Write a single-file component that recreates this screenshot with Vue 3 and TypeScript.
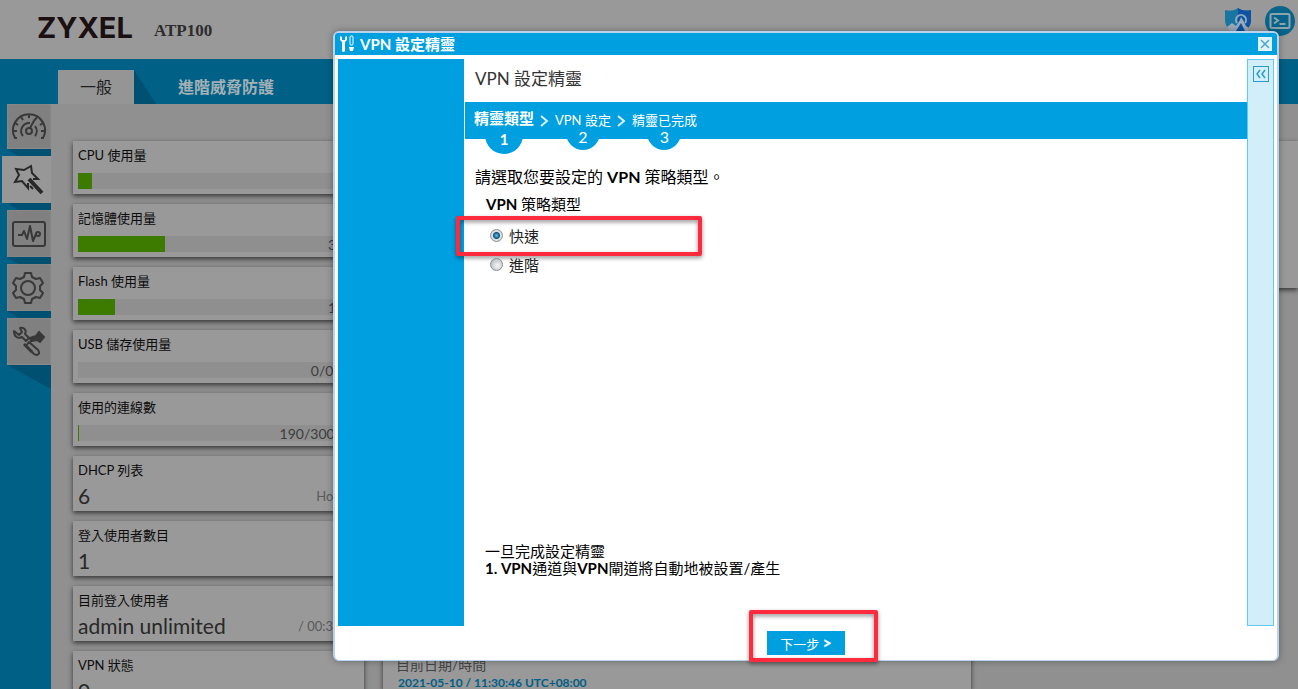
<script setup lang="ts">
import { ref } from 'vue'

interface Usage {
  label: string
  value: string
  percent: number
}
interface Info {
  label: string
  value: string
  extra?: string
}

const usages: Usage[] = [
  { label: 'CPU 使用量', value: '5 %', percent: 5 },
  { label: '記憶體使用量', value: '31 %', percent: 31 },
  { label: 'Flash 使用量', value: '13 %', percent: 13 },
  { label: 'USB 儲存使用量', value: '0/0 MB', percent: 0 },
  { label: '使用的連線數', value: '190/300000', percent: 0.4 },
]
const infos: Info[] = [
  { label: 'DHCP 列表', value: '6', extra: 'Hosts…' },
  { label: '登入使用者數目', value: '1' },
  { label: '目前登入使用者', value: 'admin unlimited', extra: '/ 00:30:00' },
  { label: 'VPN 狀態', value: '0' },
]
const steps = ['精靈類型', 'VPN 設定', '精靈已完成']
const currentStep = ref(0)
const policy = ref('express')
</script>

<template>
  <div class="page">
    <header class="top">
      <span class="logo">ZYXEL</span>
      <span class="model">ATP100</span>
      <div class="tools">
        <button class="tool" aria-label="SecuReporter">
          <svg width="28" height="28" viewBox="0 0 28 28">
            <path d="M14 1C10 4 5 4 1 3v10c0 7 5 11 13 15 8-4 13-8 13-15V3c-4 1-9 1-13-2z" fill="#1976a3" />
            <path d="M14 1c4 3 9 3 13 2v10c0 7-5 11-13 15z" fill="#0e52a0" />
            <path d="M13 16a5 5 0 1 1 8 0" fill="none" stroke="#8fa9c2" stroke-width="2" />
            <path d="M3 20l5-4 4 3 4-6 1-3 2 3 3 6 3 2-3 4-8 3-8-4z" fill="#9aabba" />
            <path d="M12 24l5-8 4 8z" fill="#0e52a0" />
          </svg>
        </button>
        <button class="tool" aria-label="CLI">
          <svg width="30" height="30" viewBox="0 0 30 30">
            <circle cx="15" cy="15" r="15" fill="#0a6489" />
            <rect x="5.500" y="8" width="19" height="14" rx="1.500" fill="none" stroke="#8da3ad" stroke-width="2" />
            <path d="M9 11.500l4 3-4 3M14.500 18h6" fill="none" stroke="#8da3ad" stroke-width="2" />
          </svg>
        </button>
      </div>
    </header>

    <nav class="tabs">
      <button class="tab active">一般</button>
      <button class="tab">進階威脅防護</button>
    </nav>

    <div class="body">
      <nav class="side">
        <button class="side-btn first" aria-label="Dashboard">
          <svg width="36" height="36" viewBox="0 0 36 36" fill="none" stroke="#383838" stroke-width="2">
            <path d="M6 29H4a16 16 0 1 1 28 0H30" />
            <path d="M18 6v3M10 8l2 3M4 14l3 2M2 22h4M32 14l-3 2M34 22h-4M26 8l-2 3" />
            <path d="M12 27a8 8 0 0 1 7-13M24 17a8 8 0 0 1 0 10" />
            <circle cx="18" cy="22" r="3" />
            <path d="M19 19l5-9" />
          </svg>
        </button>
        <i class="fold"></i>
        <button class="side-btn active" aria-label="Wizard">
          <svg width="36" height="36" viewBox="0 0 36 36" fill="none" stroke="#282828" stroke-width="2">
            <path d="M24 17H29L23 11L22 4L15 8L7 7L10 13L6 20L13 19L19 26V21" />
            <path d="M20 17L33 31" stroke-width="4" />
            <path d="M21 24l3 3" />
          </svg>
        </button>
        <i class="fold"></i>
        <button class="side-btn" aria-label="Monitor">
          <svg width="36" height="36" viewBox="0 0 36 36" fill="none" stroke="#383838" stroke-width="2">
            <rect x="2" y="6" width="32" height="24" rx="2" />
            <path d="M7 19h4l2-4 3 8 3-13 3 15 3-7" stroke-linejoin="round" />
            <circle cx="27" cy="18" r="2" />
          </svg>
        </button>
        <i class="fold"></i>
        <button class="side-btn" aria-label="Configuration">
          <svg width="36" height="36" viewBox="0 0 36 36" fill="none" stroke="#383838" stroke-width="2">
            <path d="M14 3h6l1 4 4 2 4-1 3 5-3 3v4l3 3-3 5-4-1-4 2-1 4h-6l-1-4-4-2-4 1-3-5 3-3v-4l-3-3 3-5 4 1 4-2z" stroke-linejoin="round" />
            <circle cx="17" cy="18" r="7" />
          </svg>
        </button>
        <i class="fold"></i>
        <button class="side-btn" aria-label="Maintenance">
          <svg width="36" height="36" viewBox="0 0 36 36" fill="none" stroke="#383838" stroke-width="2">
            <path d="M3 7c0 6 4 8 8 6l4 4 3-3-4-4c2-4-1-7-5-6l2 4-3 3z" stroke-linejoin="round" />
            <path d="M18 18l9 8c3 4-1 6-4 4l-8-8z" stroke-linejoin="round" />
            <path d="M19 14l6-2 3-4 5 5-4 5-3-2-6 1z" fill="#383838" />
            <path d="M13 20l8 8" stroke-width="3" />
          </svg>
        </button>
        <i class="fold last"></i>
      </nav>

      <main class="dash">
        <section class="col">
          <article v-for="u in usages" :key="u.label" class="card">
            <h3>{{ u.label }}</h3>
            <div class="bar">
              <div class="fill" :style="{ width: u.percent + '%' }"></div>
              <span>{{ u.value }}</span>
            </div>
          </article>
          <article v-for="i in infos" :key="i.label" class="card tall">
            <h3>{{ i.label }}</h3>
            <div class="info">
              <strong>{{ i.value }}</strong>
              <span>{{ i.extra }}</span>
            </div>
          </article>
        </section>
        <section class="col mid">
          <article class="card clock">
            <span class="clock-label">目前日期/時間</span>
            <a class="clock-time" href="#">2021-05-10 / 11:30:46 UTC+08:00</a>
          </article>
        </section>
        <section class="col rest"><article class="card blank"></article></section>
      </main>
    </div>

    <div class="overlay">
      <section class="dialog" role="dialog" aria-labelledby="dlg-title">
        <header class="dlg-head">
          <svg width="16" height="18" viewBox="0 0 16 18">
            <path d="M1 1v4l2 2v9q1.500 2 3 0V7l2-2V1L6 2v3H3V2z" fill="#fff" />
            <rect x="11" y="1" width="3" height="9" rx="1" fill="none" stroke="#fff" />
            <path d="M10 12h5l-1 4h-3z" fill="#fff" />
          </svg>
          <h1 id="dlg-title">VPN 設定精靈</h1>
          <button class="close" aria-label="關閉">
            <svg width="14" height="14" viewBox="0 0 14 14">
              <path d="M3 3l8 8M11 3l-8 8" stroke="#4fa3cb" stroke-width="1.500" />
            </svg>
          </button>
        </header>

        <div class="dlg-body">
          <aside class="art"></aside>
          <div class="content">
            <h2>VPN 設定精靈</h2>
            <ol class="steps">
              <li v-for="(s, n) in steps" :key="s" :class="{ current: n === currentStep }">
                <svg v-if="n > 0" class="chev" width="9" height="12" viewBox="0 0 9 12">
                  <path d="M1 1l6 5-6 5" fill="none" stroke="#d9f1fb" stroke-width="2" />
                </svg>
                <span class="step">{{ s }}<span class="num">{{ n + 1 }}</span></span>
              </li>
            </ol>
            <form class="form" @submit.prevent>
              <p class="ask">請選取您要設定的 <b>VPN</b> 策略類型。</p>
              <fieldset>
                <legend><b>VPN</b> 策略類型</legend>
                <div class="option">
                  <input id="p1" v-model="policy" type="radio" name="policy" value="express" />
                  <label for="p1">快速</label>
                  <i class="mark mark-option"></i>
                </div>
                <div class="option">
                  <input id="p2" v-model="policy" type="radio" name="policy" value="advanced" />
                  <label for="p2">進階</label>
                </div>
              </fieldset>
              <p class="note">一旦完成設定精靈<br /><b>1. VPN</b>通道與<b>VPN</b>閘道將自動地被設置/產生</p>
            </form>
          </div>
          <aside class="strip">
            <button aria-label="收合">
              <svg width="14" height="14" viewBox="0 0 14 14">
                <path d="M6 3L3 7l3 4M11 3L8 7l3 4" fill="none" stroke="#2a9cc9" stroke-width="1.500" />
              </svg>
            </button>
          </aside>
        </div>

        <footer class="dlg-foot">
          <div class="next-wrap">
            <button class="next">下一步 <b>&gt;</b></button>
            <i class="mark mark-next"></i>
          </div>
        </footer>
      </section>
    </div>
  </div>
</template>

<style>
html,
body {
  overflow: hidden;
}
</style>

<style scoped>
* {
  box-sizing: border-box;
}
.page {
  position: relative;
  height: 100vh;
  overflow: hidden;
  display: flex;
  flex-direction: column;
  background: #909090;
  font-family: Lato, 'Noto Sans CJK TC', sans-serif;
  color: #000;
}
button {
  border: 0;
  padding: 0;
  background: none;
  font: inherit;
  color: inherit;
}
h1,
h2,
h3,
p,
ol {
  margin: 0;
  padding: 0;
}

.top {
  flex: none;
  display: flex;
  align-items: center;
  height: 59px;
  padding: 0 3px 0 37px;
  background: #999;
}
.logo {
  font: 700 29px/52px Inter, sans-serif;
  color: #1a1011;
  height: 56px;
}
.model {
  margin-left: 21px;
  padding-top: 3px;
  font: 700 17px/24px 'Liberation Serif', serif;
  color: #2c2c2c;
}
.tools {
  display: flex;
  align-items: center;
  gap: 13px;
  margin-left: auto;
  padding-bottom: 18px;
}
.tool {
  display: flex;
}

.tabs {
  flex: none;
  display: flex;
  align-items: flex-end;
  height: 45px;
  padding-left: 58px;
  background: #006086;
}
.tab {
  height: 34px;
  padding: 0 22px;
  font-size: 16px;
  line-height: 34px;
  font-weight: 700;
  color: #a3b1b7;
}
.tab.active {
  position: relative;
  margin-right: 22px;
  background: #959595;
  color: #1e1e1e;
  font-weight: 400;
}
.tab.active::after {
  content: '';
  position: absolute;
  left: 100%;
  top: 0;
  width: 22px;
  height: 34px;
  background: #005072;
  clip-path: polygon(0 0, 100% 100%, 0 100%);
}

.body {
  flex: 1;
  min-height: 0;
  display: flex;
}
.side {
  flex: none;
  width: 51px;
  display: flex;
  flex-direction: column;
  align-items: flex-end;
  background: #006086;
}
.side-btn {
  flex: none;
  display: flex;
  align-items: center;
  justify-content: center;
  width: 44px;
  height: 47px;
  background: #808080;
  box-shadow: inset 0 0 2px #999;
}
.side-btn.first {
  height: 45px;
}
.side-btn.active {
  width: 49px;
  background: #979797;
}
.fold {
  flex: none;
  width: 44px;
  height: 7px;
  background: #005072;
  clip-path: polygon(0 0, 100% 0, 100% 100%, 25% 100%);
}
.fold.last {
  height: 24px;
  clip-path: polygon(0 0, 100% 0, 100% 100%);
}

.dash {
  flex: 1;
  min-width: 0;
  display: grid;
  grid-template-columns: 291px 588px minmax(300px, 1fr);
  gap: 19px;
  padding: 37px 0 0 22px;
  overflow: hidden;
}
.col {
  display: flex;
  flex-direction: column;
  gap: 10px;
  min-height: 0;
}
.card {
  flex: none;
  height: 53px;
  padding: 5px;
  background: #999;
  box-shadow: 0 2px 5px rgba(0, 0, 0, 0.65);
}
.card h3 {
  font-size: 13px;
  line-height: 18px;
  font-weight: 400;
  color: #0c0c0c;
}
.bar {
  display: flex;
  justify-content: space-between;
  height: 16px;
  margin-top: 9px;
  background: #8f8f8f;
}
.fill {
  background: #3d7a00;
}
.bar span {
  font-size: 14px;
  line-height: 17px;
  color: #3d3d3d;
}
.card.tall {
  height: 55px;
}
.info {
  display: flex;
  justify-content: space-between;
  align-items: center;
  height: 24px;
  margin-top: 5px;
}
.info strong {
  font-size: 21px;
  line-height: 24px;
  font-weight: 400;
  color: #282828;
}
.info span {
  font-size: 13px;
  color: #5a5a5a;
}
.clock {
  flex: 1;
  display: flex;
  flex-direction: column;
  justify-content: flex-end;
  padding: 0 13px;
}
.clock-label {
  font-size: 14px;
  line-height: 24px;
  color: #444;
}
.clock-time {
  padding-left: 2px;
  font-size: 12px;
  line-height: 12px;
  font-weight: 700;
  color: #006086;
  text-decoration: none;
}
.blank {
  height: 147px;
}

.overlay {
  position: absolute;
  inset: 0;
  display: flex;
  padding: 31px 19px 28px 333px;
}
.dialog {
  flex: 1;
  min-width: 0;
  display: flex;
  flex-direction: column;
  border: 2px solid #b9d3ec;
  border-bottom-width: 1px;
  border-radius: 6px;
  background: #fff;
  box-shadow: 0 0 7px rgba(0, 0, 0, 0.35);
}
.dlg-head {
  flex: none;
  display: flex;
  align-items: center;
  height: 22px;
  padding: 0 5px 0 4px;
  border-radius: 3px 3px 0 0;
  background: #00a0e0;
}
.dlg-head h1 {
  margin-left: 5px;
  font-size: 15px;
  line-height: 22px;
  font-weight: 700;
  color: #fff;
}
.close {
  display: flex;
  margin-left: auto;
  background: #dff3fc;
}
.dlg-body {
  flex: 1;
  min-height: 0;
  display: flex;
  padding: 4px 3px 0;
}
.art {
  flex: none;
  width: 126px;
  background: #00a0e0;
}
.content {
  flex: 1;
  min-width: 0;
  display: flex;
  flex-direction: column;
  padding-left: 1px;
}
.content h2 {
  height: 43px;
  padding-left: 10px;
  font-size: 17px;
  line-height: 40px;
  font-weight: 400;
  color: #333;
}
.steps {
  flex: none;
  display: flex;
  height: 37px;
  padding-left: 9px;
  list-style: none;
  background: #00a0e0;
  color: #fff;
}
.steps li {
  position: relative;
  z-index: 1;
  display: flex;
  align-items: center;
  font-size: 13px;
  line-height: 37px;
}
.steps .current {
  align-items: flex-start;
  font-size: 15px;
  line-height: 32px;
  font-weight: 700;
}
.chev {
  margin: 0 6px;
}
.step {
  position: relative;
}
.num {
  position: absolute;
  left: 50%;
  top: 14px;
  width: 34px;
  height: 34px;
  margin-left: -17px;
  border-radius: 50%;
  background: #00a0e0;
  font-size: 16px;
  line-height: 42px;
  text-align: center;
  z-index: -1;
}
.current .num {
  width: 38px;
  height: 38px;
  margin-left: -19px;
  line-height: 46px;
  font-size: 15px;
}
.form {
  flex: 1;
  display: flex;
  flex-direction: column;
  padding: 26px 10px 49px;
}
.ask {
  font-size: 16px;
  line-height: 24px;
}
fieldset {
  margin: 0 0 0 11px;
  padding: 0;
  border: 0;
}
legend {
  padding: 3px 0 5px;
  font-size: 15px;
  line-height: 24px;
}
.option {
  position: relative;
  display: flex;
  align-items: center;
  height: 29px;
  padding-left: 4px;
  font-size: 15px;
  color: #222;
}
.option input {
  appearance: none;
  width: 13px;
  height: 13px;
  margin: 0 6px 0 0;
  border: 1px solid #8a8f94;
  border-radius: 50%;
  background: radial-gradient(circle at 60% 60%, #f0f0f0 10%, #b8bcc0 80%);
}
.option input:checked {
  background: radial-gradient(circle, #5cc4ee 0, #14527d 3px, #d8dee2 4px);
}
.note {
  margin: auto 0 0 10px;
  font-size: 15px;
  line-height: 17px;
}
.mark {
  position: absolute;
  border: 4px solid #ff2a3d;
  border-radius: 2px;
  filter: drop-shadow(0 2px 2px rgba(0, 0, 0, 0.45));
  pointer-events: none;
}
.mark-option {
  left: -30px;
  top: -5px;
  width: 246px;
  height: 40px;
}
.strip {
  flex: none;
  display: flex;
  justify-content: center;
  align-items: flex-start;
  width: 27px;
  padding-top: 6px;
  border: 1px solid #5fcbf5;
  background: #d2eef9;
}
.strip button {
  display: flex;
  border: 1px solid #2a9cc9;
}
.dlg-foot {
  flex: none;
  display: flex;
  justify-content: center;
  height: 34px;
  padding-top: 5px;
}
.next-wrap {
  position: relative;
  height: 24px;
}
.next {
  height: 24px;
  padding: 0 13px;
  background: #00a0e0;
  color: #fff;
  font-size: 13px;
  line-height: 24px;
}
.next b {
  font-size: 16px;
  font-weight: 900;
}
.mark-next {
  left: -18px;
  right: -33px;
  top: -21px;
  bottom: -7px;
}
</style>
